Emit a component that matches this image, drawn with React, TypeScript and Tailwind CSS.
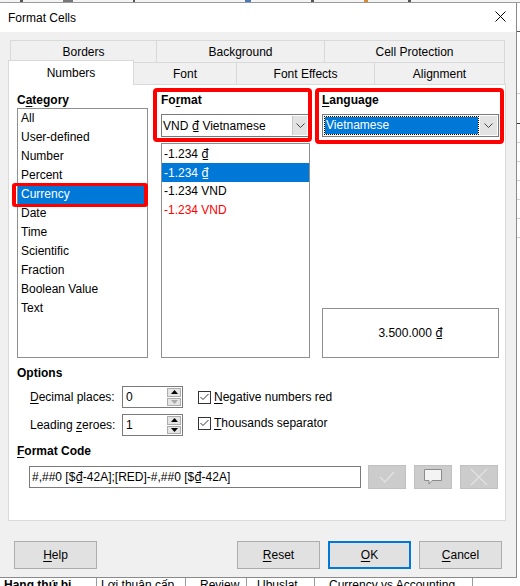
import React from "react";

const U = ({ children }: { children: React.ReactNode }) => (
  <span className="underline decoration-1 underline-offset-2">{children}</span>
);

const D = () => <span className="font-['Noto_Sans','DejaVu_Sans',sans-serif]">₫</span>;

function Chevron() {
  return (
    <svg width="9" height="5" viewBox="0 0 9 5">
      <path d="M0.5 0.5 L4.5 4.5 L8.5 0.5" fill="none" stroke="#444" strokeWidth="1" />
    </svg>
  );
}

function Spin({ value, downDisabled }: { value: string; downDisabled?: boolean }) {
  return (
    <div className="flex h-[22px] w-[61px] border border-[#7a7a7a] bg-white">
      <div className="flex-1 pl-[3px] leading-[20px]">{value}</div>
      <div className="flex w-[15px] flex-col gap-px py-px pr-px">
        <div className="flex flex-1 items-center justify-center border border-[#acacac] bg-[#e5e5e5]">
          <svg width="7" height="4" viewBox="0 0 7 4">
            <path d="M0 4 L3.5 0 L7 4 Z" fill="#000" />
          </svg>
        </div>
        <div className="flex flex-1 items-center justify-center border border-[#acacac] bg-[#e5e5e5]">
          <svg width="7" height="4" viewBox="0 0 7 4">
            <path d="M0 0 L3.5 4 L7 0 Z" fill={downDisabled ? "#a8a8a8" : "#000"} />
          </svg>
        </div>
      </div>
    </div>
  );
}

function Check() {
  return (
    <div className="flex h-[13px] w-[13px] items-center justify-center border border-[#333] bg-white">
      <svg width="11" height="11" viewBox="0 0 11 11">
        <path d="M1.5 5 L4 7.5 L9.5 2" fill="none" stroke="#333" strokeWidth="1" />
      </svg>
    </div>
  );
}

const categories = [
  "All",
  "User-defined",
  "Number",
  "Percent",
  "Currency",
  "Date",
  "Time",
  "Scientific",
  "Fraction",
  "Boolean Value",
  "Text",
];

export default function App() {
  return (
    <div className="h-[586px] w-[520px] overflow-hidden bg-white font-['Liberation_Sans',Arial,sans-serif] text-[12px] leading-[16px] text-black">
      {/* top spreadsheet strip */}
      <div className="flex h-[3px] border-b border-[#9a9a9a] bg-[#f4f4f4]">
        <div className="ml-[20px] w-[3px] bg-[#555]" />
        <div className="ml-[40px] w-[10px] bg-[#777]" />
        <div className="ml-[60px] w-[2px] bg-[#555]" />
        <div className="ml-[110px] w-[6px] bg-[#4a7ab5]" />
        <div className="ml-[60px] w-[3px] bg-[#555]" />
        <div className="ml-[50px] w-[4px] bg-[#d08a3a]" />
        <div className="ml-[40px] w-[3px] bg-[#555]" />
      </div>

      <div className="flex h-[575px]">
        {/* dialog */}
        <div className="flex w-[517px] flex-col border-r border-b border-[#8a8a8a]">
          {/* title bar */}
          <div className="flex h-[29px] items-center justify-between bg-white pl-[8px] pr-[10px]">
            <span>Format Cells</span>
            <svg width="11" height="11" viewBox="0 0 11 11" className="-mt-[2px]">
              <path d="M0.5 0.5 L10.5 10.5 M10.5 0.5 L0.5 10.5" stroke="#000" strokeWidth="1" />
            </svg>
          </div>

          {/* body */}
          <div className="flex h-[545px] flex-col bg-[#f0f0f0] pt-[8px] pl-[8px] pr-[10px]">
            {/* tab row 1 */}
            <div className="ml-[2px] mr-[1px] flex h-[22px]">
              <div className="flex w-[146px] items-center justify-center border-t border-l border-[#d9d9d9]">Borders</div>
              <div className="flex w-[168px] items-center justify-center border-t border-l border-[#d9d9d9]">Background</div>
              <div className="flex w-[181px] items-center justify-center border-x border-t border-[#d9d9d9]">Cell Protection</div>
            </div>
            {/* tab row 2 */}
            <div className="mr-[1px] flex h-[22px] items-end">
              <div className="relative z-10 -mb-px flex h-[25px] w-[126px] items-center justify-center border-x border-t border-[#d9d9d9] bg-white">
                Numbers
              </div>
              <div className="flex h-[22px] w-[102px] items-center justify-center border-t border-[#d9d9d9]">Font</div>
              <div className="flex h-[22px] w-[138px] items-center justify-center border-t border-l border-[#d9d9d9]">Font Effects</div>
              <div className="flex h-[22px] w-[131px] items-center justify-center border-x border-t border-[#d9d9d9]">Alignment</div>
            </div>

            {/* panel */}
            <div className="flex h-[437px] flex-col border border-[#d9d9d9] bg-white pt-[7px] pl-[8px]">
              <div className="flex h-[266px]">
                {/* Category */}
                <div className="flex w-[131px] flex-col">
                  <div className="h-[16px] font-bold">
                    C<U>a</U>tegory
                  </div>
                  <div className="flex-1 border border-[#8f8f8f]">
                    {categories.map((c) => (
                      <div
                        key={c}
                        className={
                          c === "Currency"
                            ? "relative h-[19px] bg-[#0078d7] pl-[3px] leading-[19px] text-white"
                            : "h-[19px] pl-[3px] leading-[19px]"
                        }
                      >
                        {c}
                        {c === "Currency" && (
                          <div className="pointer-events-none absolute -top-[2px] -bottom-[3px] -left-[6px] -right-[1px] rounded-[3px] border-x-4 border-y-[3px] border-[#ff0000]" />
                        )}
                      </div>
                    ))}
                  </div>
                </div>

                {/* Format */}
                <div className="relative ml-[13px] flex w-[149px] flex-col">
                  <div className="h-[16px] font-bold">
                    Fo<U>r</U>mat
                  </div>
                  <div className="mt-[6px] flex h-[23px] w-[148px] border border-[#7a7a7a] bg-white">
                    <div className="flex-1 pl-[1px] leading-[21px]">
                      VND <D /> Vietnamese
                    </div>
                    <div className="m-px flex w-[15px] items-center justify-center border-l border-[#c8c8c8] bg-[#e3e3e3]">
                      <Chevron />
                    </div>
                  </div>
                  <div className="mt-[6px] flex-1 border border-[#8f8f8f]">
                    <div className="h-[19px] pl-[2px] leading-[19px]">
                      -1.234 <D />
                    </div>
                    <div className="h-[19px] bg-[#0078d7] pl-[2px] leading-[19px] text-white">
                      -1.234 <D />
                    </div>
                    <div className="h-[19px] pl-[2px] leading-[19px]">-1.234 VND</div>
                    <div className="h-[19px] pl-[2px] leading-[19px] text-[#ff0000]">-1.234 VND</div>
                  </div>
                  <div className="pointer-events-none absolute -top-[4px] -left-[8px] h-[54px] w-[159px] rounded-[4px] border-4 border-[#ff0000]" />
                </div>

                {/* Language */}
                <div className="relative ml-[12px] flex w-[177px] flex-col">
                  <div className="h-[16px] font-bold">
                    <U>L</U>anguage
                  </div>
                  <div className="mt-[6px] flex h-[23px] border border-[#7a7a7a] bg-white">
                    <div className="m-px flex-1 border border-dotted border-black bg-[#0078d7] bg-clip-padding pl-[1px] leading-[17px] text-white">
                      Vietnamese
                    </div>
                    <div className="my-px mr-px flex w-[17px] items-center justify-center bg-[#e3e3e3]">
                      <Chevron />
                    </div>
                  </div>
                  <div className="flex-1" />
                  <div className="flex h-[50px] items-center justify-center border border-[#8f8f8f]">
                    <span>
                      3.500.000 <D />
                    </span>
                  </div>
                  <div className="pointer-events-none absolute -top-[4px] -left-[7px] h-[56px] w-[189px] rounded-[4px] border-4 border-[#ff0000]" />
                </div>
              </div>

              {/* Options */}
              <div className="mt-[7px] h-[16px] font-bold">Options</div>
              <div className="mt-[5px] flex h-[22px] items-center">
                <div className="w-[105px] pl-[13px]">
                  <U>D</U>ecimal places:
                </div>
                <Spin value="0" downDisabled />
                <div className="ml-[15px]">
                  <Check />
                </div>
                <div className="ml-[3px]">
                  <U>N</U>egative numbers red
                </div>
              </div>
              <div className="mt-[6px] flex h-[22px] items-center">
                <div className="w-[105px] pl-[13px]">
                  Leading <U>z</U>eroes:
                </div>
                <Spin value="1" />
                <div className="ml-[15px] -mt-[4px]">
                  <Check />
                </div>
                <div className="ml-[3px] -mt-[4px]">
                  <U>T</U>housands separator
                </div>
              </div>

              {/* Format code */}
              <div className="mt-[7px] h-[16px] font-bold">
                <U>F</U>ormat Code
              </div>
              <div className="mt-[6px] flex h-[24px] items-center">
                <div className="ml-[12px] h-[22px] w-[332px] border border-[#7a7a7a] bg-white pl-[2px] leading-[20px]">
                  #,##0 [$<D />-42A];[RED]-#,##0 [$<D />-42A]
                </div>
                <div className="ml-[7px] flex h-[24px] w-[38px] items-center justify-center border border-[#c0c0c0] bg-[#cccccc]">
                  <svg width="16" height="14" viewBox="0 0 16 14">
                    <path d="M1 7 L6 12 L15 2" fill="none" stroke="#e4e4e4" strokeWidth="1.2" />
                  </svg>
                </div>
                <div className="ml-[8px] flex h-[24px] w-[38px] items-center justify-center border border-[#c0c0c0] bg-[#cccccc]">
                  <svg width="18" height="16" viewBox="0 0 18 16">
                    <path d="M0.5 0.5 H17.5 V11.5 H8 L5 15 V11.5 H0.5 Z" fill="#f4f4f4" stroke="#8c8c8c" strokeWidth="1" />
                  </svg>
                </div>
                <div className="ml-[8px] flex h-[24px] w-[38px] items-center justify-center border border-[#c0c0c0] bg-[#cccccc]">
                  <svg width="18" height="18" viewBox="0 0 18 18">
                    <path d="M1 1 L17 17 M17 1 L1 17" stroke="#e2e2e2" strokeWidth="1.2" />
                  </svg>
                </div>
              </div>
            </div>

            {/* buttons */}
            <div className="mt-[20px] flex h-[28px]">
              <div className="ml-[6px] flex w-[83px] items-center justify-center border border-[#adadad] bg-[#e1e1e1]">
                <span>
                  <U>H</U>elp
                </span>
              </div>
              <div className="flex-1" />
              <div className="flex w-[83px] items-center justify-center border border-[#adadad] bg-[#e1e1e1]">
                <span>
                  <U>R</U>eset
                </span>
              </div>
              <div className="ml-[8px] flex w-[83px] items-center justify-center border-2 border-[#0078d7] bg-[#e1e1e1]">
                <span>
                  <U>O</U>K
                </span>
              </div>
              <div className="ml-[8px] mr-[4px] flex w-[83px] items-center justify-center border border-[#adadad] bg-[#e1e1e1]">
                <span>
                  <U>C</U>ancel
                </span>
              </div>
            </div>
          </div>
        </div>

        {/* right spreadsheet strip */}
        <div className="flex flex-1 flex-col bg-white">
          <div className="h-[29px] border-b border-[#555]" />
          <div className="h-[62px] border-b border-[#d0d0d0]" />
          <div className="h-[30px] border-b border-[#333]" />
          <div className="h-[19px] border-b border-[#d0d0d0]" />
          <div className="h-[19px] border-b border-[#d0d0d0]" />
          <div className="h-[19px] border-b border-[#d0d0d0]" />
          <div className="h-[19px] border-b border-[#d0d0d0]" />
          <div className="h-[19px] border-b border-[#d0d0d0]" />
          <div className="h-[19px] border-b border-[#d0d0d0]" />
        </div>
      </div>

      {/* bottom spreadsheet strip */}
      <div className="flex h-[8px] overflow-hidden bg-white">
        <div className="w-[97px] overflow-hidden border-r border-[#9a9a9a] pl-[4px] leading-[16px]">
          <div className="-mt-[1px] font-bold">Hạng thứ bị</div>
        </div>
        <div className="w-[89px] overflow-hidden border-r border-[#9a9a9a] pl-[4px]">
          <div className="-mt-[1px]">Lợi thuận cấp</div>
        </div>
        <div className="w-[61px] overflow-hidden border-r border-[#9a9a9a] pl-[14px]">
          <div className="-mt-[1px]">Review</div>
        </div>
        <div className="w-[68px] overflow-hidden border-r border-[#9a9a9a] pl-[10px]">
          <div className="-mt-[1px]">Ubuslat</div>
        </div>
        <div className="w-[158px] overflow-hidden border-r border-[#9a9a9a] pl-[14px]">
          <div className="-mt-[1px] whitespace-nowrap">Currency vs Accounting</div>
        </div>
        <div className="flex-1" />
      </div>
    </div>
  );
}
